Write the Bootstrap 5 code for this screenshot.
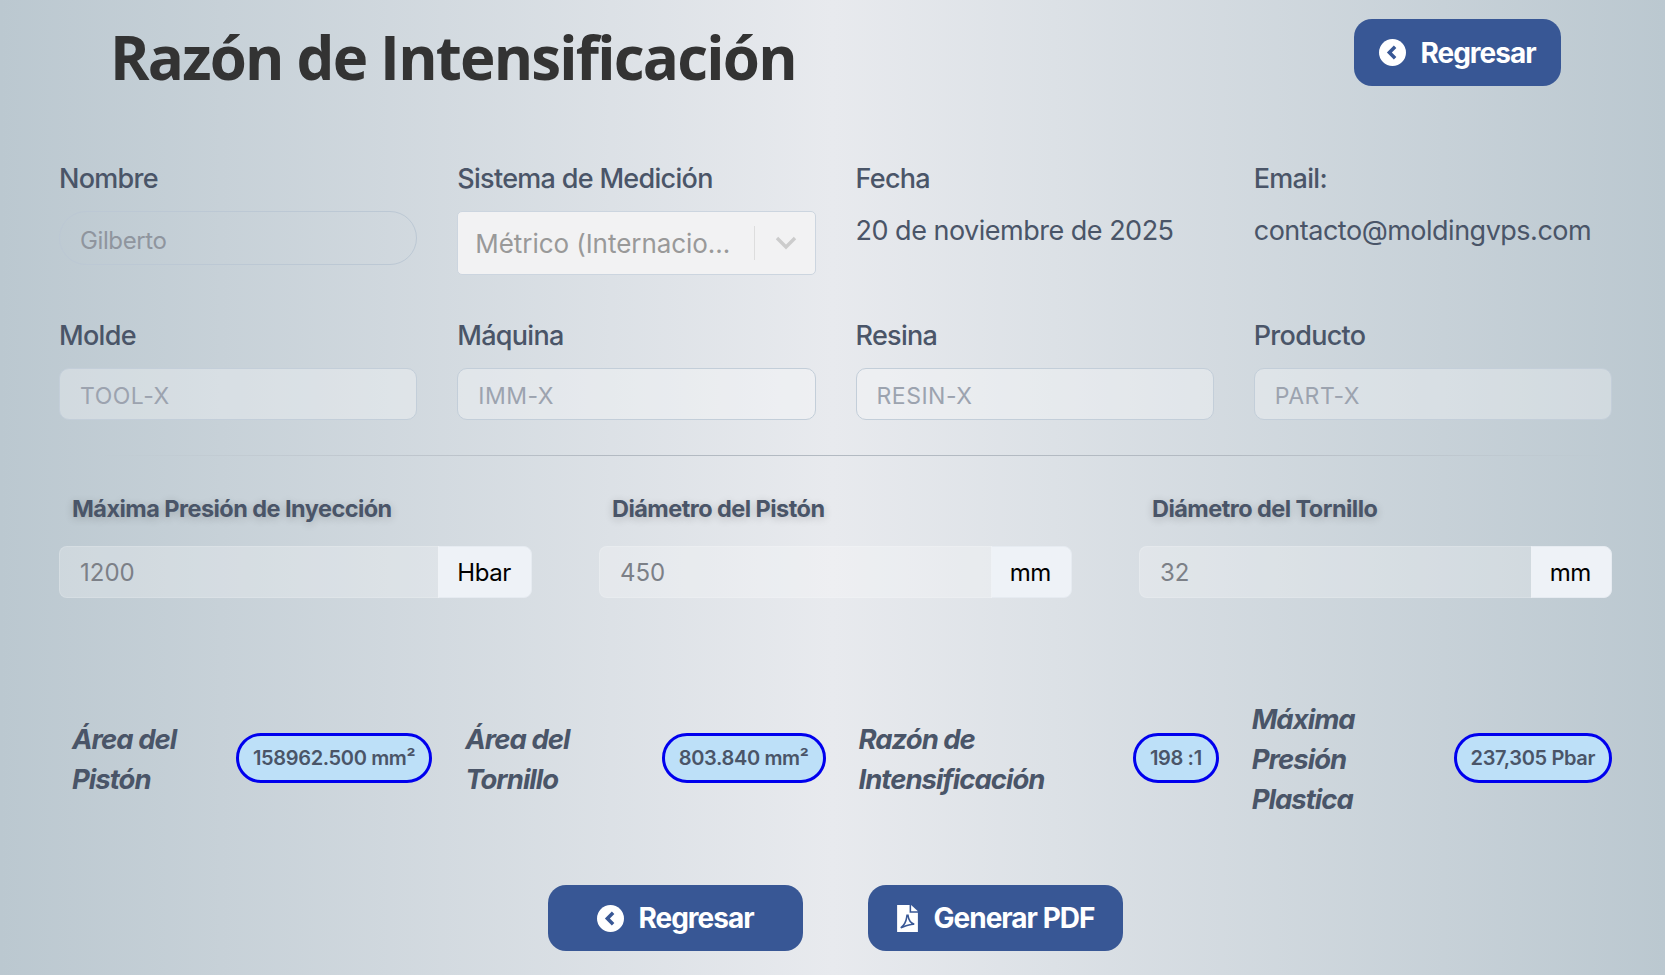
<!DOCTYPE html>
<html lang="es">
<head>
    <meta charset="UTF-8">
    <meta name="viewport" content="width=device-width, initial-scale=1.0">
    <title>Razón de Intensificación</title>
    <link rel="stylesheet" href="https://cdn.jsdelivr.net/npm/bootstrap@5.3.0/dist/css/bootstrap.min.css">
    <script src="https://cdn.jsdelivr.net/npm/bootstrap@5.3.0/dist/js/bootstrap.bundle.min.js"></script>
    <style>
        html, body { height: 100%; }
        body {
            background: linear-gradient(90deg, #bbc8d0 0%, #e8eaee 50%, #bbc8d0 100%);
            font-family: Inter, "Liberation Sans", sans-serif;
            overflow: hidden;
        }
        .page-wrap { padding: 19px 53px 0 59px; }
        .head-row { height: 67px; margin-bottom: 75px; }
        .page-title {
            font-family: "Open Sans", sans-serif;
            font-weight: 700;
            font-size: 60px;
            line-height: 67px;
            color: #333;
            margin: 5px 0 0 51px;
            letter-spacing: -1.8px;
        }
        .btn-back {
            background: #385795;
            color: #fff;
            border: 0;
            border-radius: 18px;
            font-weight: 700;
            font-size: 28px;
            letter-spacing: -1px;
            display: inline-flex;
            align-items: center;
            justify-content: center;
            gap: 14px;
        }
        .btn-back:hover { background: #385795; color: #fff; }
        .btn-top { width: 207px; height: 67px; margin-right: 51px; }
        .btn-bottom { width: 255px; height: 66px; }
        .field-row { --bs-gutter-x: 40px; }
        .field-label {
            font-size: 27px;
            font-weight: 500;
            color: #4a5568;
            letter-spacing: -0.7px;
            line-height: 36px;
            margin-bottom: 14px;
            display: block;
        }
        .field-text { font-size: 27px; line-height: 40px; margin-top: 1px; color: #4a5568; letter-spacing: -0.5px; }
        .form-control.soft {
            height: 52px;
            border: 1px solid #c3ced9;
            border-radius: 10px;
            background: rgba(255, 255, 255, .3);
            color: #9ca3af;
            font-size: 23px;
            padding: 4px 20px 0;
            letter-spacing: .5px;
        }
        .form-control.soft.rounded-name { border-radius: 27px; height: 54px; background: transparent; border-color: #bcc8d4; color: #8f959e; font-size: 24px; letter-spacing: -.4px; }
        .fake-select {
            height: 64px;
            background: #f2f2f3;
            border: 1px solid #ccd5df;
            border-radius: 5px;
            color: #999;
            font-size: 26px;
            padding-left: 17px;
        }
        .fake-select .sel-value { width: 262px; white-space: nowrap; letter-spacing: -.05px; }
        .sel-sep { width: 1px; height: 34px; background: #ddd; margin: 0 20px 0 17px; }
        .row-two { margin-top: 43px; }
        .split-line {
            height: 1px;
            border: 0;
            opacity: 1;
            margin: 35px 0 35px;
            background: linear-gradient(90deg, transparent 2%, #b3bac2 35%, #b3bac2 75%, transparent 100%);
        }
        .press-row { --bs-gutter-x: 67px; }
        .press-label {
            font-size: 23.5px;
            font-weight: 700;
            color: #4a5568;
            letter-spacing: -0.55px;
            text-shadow: 0 2px 8px rgba(0, 0, 0, .2);
            padding-left: 13px;
            line-height: 36px;
            margin-bottom: 19px;
            display: block;
        }
        .press-group .form-control {
            height: 52px;
            border: 1px solid rgba(255, 255, 255, .15);
            background: rgba(255, 255, 255, .25);
            color: #7c8087;
            font-size: 24px;
            padding: 0 20px;
            border-radius: 8px 0 0 8px;
        }
        .press-group .input-group-text {
            height: 52px;
            background: #eef2f7;
            border: 1px solid #e6ebf1;
            color: #000;
            font-size: 24px;
            padding: 2px 20px 0 18px;
            border-radius: 0 8px 8px 0;
            letter-spacing: -.4px;
        }
        .result-row { margin-top: 101px; height: 120px; gap: 20px; }
        .result-item { flex: 1 1 0; min-width: 0; }
        .result-label {
            font-size: 27.5px;
            font-weight: 700;
            font-style: italic;
            line-height: 40px;
            color: #4a5568;
            letter-spacing: -1px;
            padding-left: 13px;
        }
        .result-pill {
            height: 50px;
            margin-bottom: 2px;
            border: 3px solid #0000ee;
            border-radius: 25px;
            background: #bde0f8;
            color: #4a5568;
            font-size: 20px;
            font-weight: 600;
            padding: 0 14px;
            white-space: nowrap;
            letter-spacing: -.35px;
        }
        .foot-row { margin-top: 66px; gap: 65px; }
    </style>
</head>
<body>
    <div class="page-wrap">
        <div class="head-row d-flex justify-content-between align-items-start">
            <h1 class="page-title">Razón de Intensificación</h1>
            <button class="btn btn-back btn-top" type="button">
                <svg width="27" height="27" viewBox="0 0 26 26"><circle cx="13" cy="13" r="13" fill="#fff"/><path d="M15.5 7.5 10 13l5.5 5.5" fill="none" stroke="#385795" stroke-width="3.4"/></svg>
                Regresar
            </button>
        </div>

        <div class="row field-row">
            <div class="col-3">
                <label class="field-label">Nombre</label>
                <input class="form-control soft rounded-name" type="text" value="Gilberto" readonly>
            </div>
            <div class="col-3">
                <label class="field-label">Sistema de Medición</label>
                <div class="fake-select d-flex align-items-center">
                    <span class="sel-value">Métrico (Internacio...</span>
                    <span class="sel-sep"></span>
                    <svg width="22" height="14" viewBox="0 0 22 14"><path d="M2 2l9 9 9-9" fill="none" stroke="#ccc" stroke-width="3.4"/></svg>
                </div>
            </div>
            <div class="col-3">
                <label class="field-label">Fecha</label>
                <div class="field-text">20 de noviembre de 2025</div>
            </div>
            <div class="col-3">
                <label class="field-label">Email:</label>
                <div class="field-text">contacto@moldingvps.com</div>
            </div>
        </div>

        <div class="row field-row row-two">
            <div class="col-3">
                <label class="field-label">Molde</label>
                <input class="form-control soft" type="text" value="TOOL-X" readonly>
            </div>
            <div class="col-3">
                <label class="field-label">Máquina</label>
                <input class="form-control soft" type="text" value="IMM-X" readonly>
            </div>
            <div class="col-3">
                <label class="field-label">Resina</label>
                <input class="form-control soft" type="text" value="RESIN-X" readonly>
            </div>
            <div class="col-3">
                <label class="field-label">Producto</label>
                <input class="form-control soft" type="text" value="PART-X" readonly>
            </div>
        </div>

        <hr class="split-line">

        <div class="row press-row">
            <div class="col-4">
                <label class="press-label">Máxima Presión de Inyección</label>
                <div class="input-group press-group">
                    <input class="form-control" type="text" value="1200" readonly>
                    <span class="input-group-text">Hbar</span>
                </div>
            </div>
            <div class="col-4">
                <label class="press-label">Diámetro del Pistón</label>
                <div class="input-group press-group">
                    <input class="form-control" type="text" value="450" readonly>
                    <span class="input-group-text">mm</span>
                </div>
            </div>
            <div class="col-4">
                <label class="press-label">Diámetro del Tornillo</label>
                <div class="input-group press-group">
                    <input class="form-control" type="text" value="32" readonly>
                    <span class="input-group-text">mm</span>
                </div>
            </div>
        </div>

        <div class="result-row d-flex">
            <div class="result-item d-flex justify-content-between align-items-center">
                <div class="result-label">Área del<br>Pistón</div>
                <div class="result-pill d-flex align-items-center">158962.500 mm²</div>
            </div>
            <div class="result-item d-flex justify-content-between align-items-center">
                <div class="result-label">Área del<br>Tornillo</div>
                <div class="result-pill d-flex align-items-center">803.840 mm²</div>
            </div>
            <div class="result-item d-flex justify-content-between align-items-center">
                <div class="result-label">Razón de<br>Intensificación</div>
                <div class="result-pill d-flex align-items-center">198 :1</div>
            </div>
            <div class="result-item d-flex justify-content-between align-items-center">
                <div class="result-label">Máxima<br>Presión<br>Plastica</div>
                <div class="result-pill d-flex align-items-center">237,305 Pbar</div>
            </div>
        </div>

        <div class="foot-row d-flex justify-content-center">
            <button class="btn btn-back btn-bottom" type="button">
                <svg width="27" height="27" viewBox="0 0 26 26"><circle cx="13" cy="13" r="13" fill="#fff"/><path d="M15.5 7.5 10 13l5.5 5.5" fill="none" stroke="#385795" stroke-width="3.4"/></svg>
                Regresar
            </button>
            <button class="btn btn-back btn-bottom gap-3" type="button">
                <svg width="21" height="27" viewBox="0 0 20 26"><path d="M0 0h12v7.500h8V26H0z" fill="#fff"/><path d="M13.500 0 20 6h-6.500z" fill="#fff"/><path d="M9.500 10c-.8 3 .2 7-6 12 5-2 9-4 13-3.500-3-1-5.500-4-6-8.500z" fill="none" stroke="#385795" stroke-width="1.500"/></svg>
                Generar PDF
            </button>
        </div>
    </div>
</body>
</html>
